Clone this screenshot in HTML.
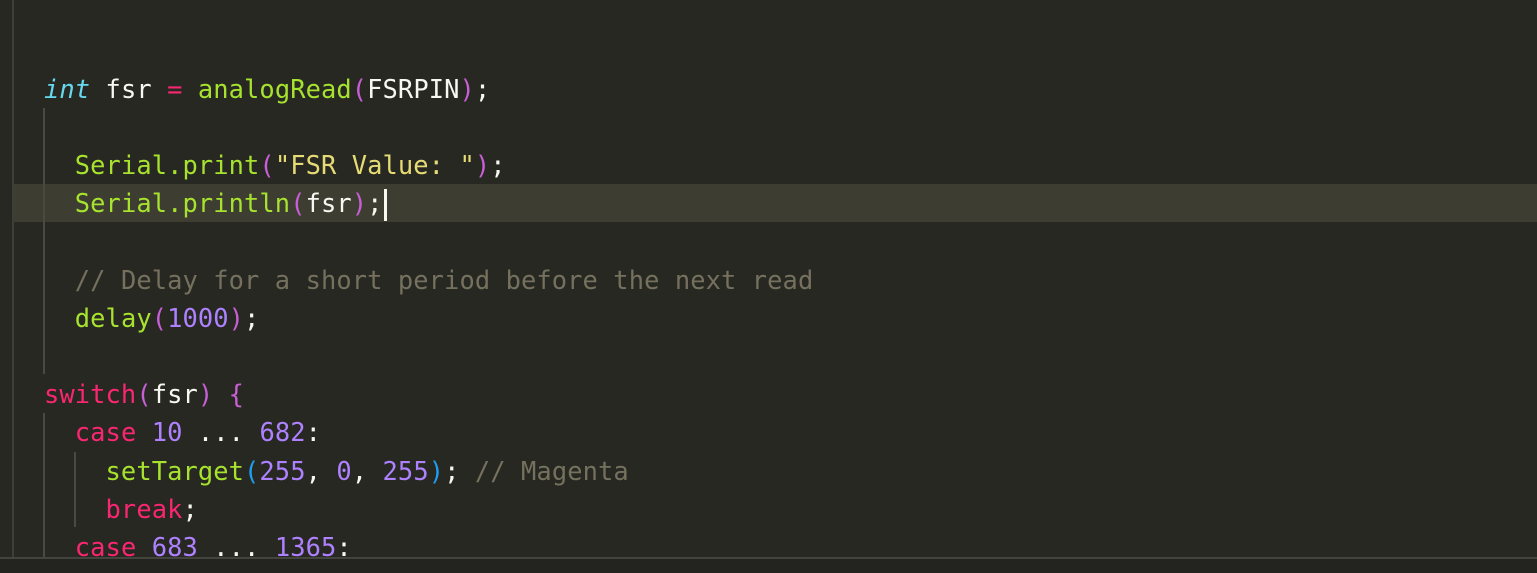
<!DOCTYPE html>
<html><head><style>
html,body{margin:0;padding:0;background:#272822;width:1537px;height:573px;overflow:hidden;position:relative}
.ln{position:absolute;left:44px;height:38.2px;line-height:38.2px;font-family:"DejaVu Sans Mono","Liberation Mono",monospace;font-size:25.4px;letter-spacing:0.1px;color:#f8f8f2;white-space:pre}
.k{color:#f92672}.t{color:#66d9ef;font-style:italic}.f{color:#a6e22e}.s{color:#e6db74}.n{color:#ae81ff}.c{color:#75715e}.p{color:#c95fd6}.b{color:#1e9ef0}
.g{position:absolute;width:2px;background:#4a4a44}
</style></head><body>
<div style="position:absolute;left:12px;top:0;width:2px;height:558px;background:#3f3f3a"></div>
<div style="position:absolute;left:14px;top:184px;width:1523px;height:38px;background:#3e3d32"></div>
<div style="position:absolute;left:0;top:557px;width:1537px;height:2px;background:#44443e"></div>
<div style="position:absolute;left:0;top:559px;width:1537px;height:14px;background:#23241f"></div>
<div class="g" style="left:43px;top:108px;height:266px"></div>
<div class="g" style="left:43px;top:413px;height:144px"></div>
<div class="g" style="left:74px;top:452px;height:75px"></div>
<div style="position:absolute;left:384px;top:189px;width:3px;height:32px;background:#f8f8f0"></div>
<div class="ln" style="top:70px"><span class="t">int</span> fsr <span class="k">=</span> <span class="f">analogRead</span><span class="p">(</span>FSRPIN<span class="p">)</span>;</div>
<div class="ln" style="top:146px">  <span class="f">Serial.print</span><span class="p">(</span><span class="s">"FSR Value: "</span><span class="p">)</span>;</div>
<div class="ln" style="top:184px">  <span class="f">Serial.println</span><span class="p">(</span>fsr<span class="p">)</span>;</div>
<div class="ln" style="top:261px">  <span class="c">// Delay for a short period before the next read</span></div>
<div class="ln" style="top:299px">  <span class="f">delay</span><span class="p">(</span><span class="n">1000</span><span class="p">)</span>;</div>
<div class="ln" style="top:375px"><span class="k">switch</span><span class="p">(</span>fsr<span class="p">)</span> <span class="p">{</span></div>
<div class="ln" style="top:413px">  <span class="k">case</span> <span class="n">10</span> ... <span class="n">682</span>:</div>
<div class="ln" style="top:452px">    <span class="f">setTarget</span><span class="b">(</span><span class="n">255</span>, <span class="n">0</span>, <span class="n">255</span><span class="b">)</span>; <span class="c">// Magenta</span></div>
<div class="ln" style="top:490px">    <span class="k">break</span>;</div>
<div class="ln" style="top:528px">  <span class="k">case</span> <span class="n">683</span> ... <span class="n">1365</span>:</div>
</body></html>
